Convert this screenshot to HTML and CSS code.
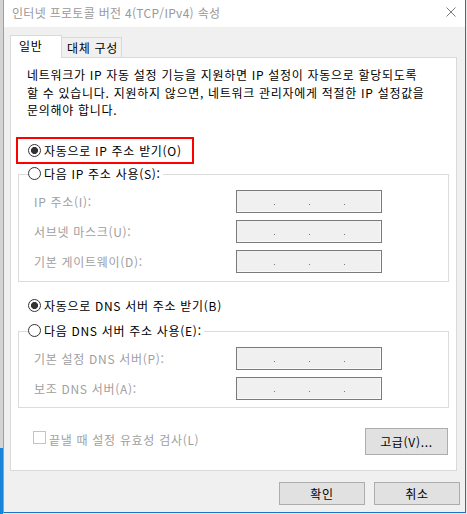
FILE: index.html
```html
<!DOCTYPE html>
<html lang="ko">
<head>
<meta charset="utf-8">
<title>인터넷 프로토콜 버전 4(TCP/IPv4) 속성</title>
<link rel="stylesheet" href="styles.css">
</head>
<body>
<div class="screen">
  <div class="strip"></div>
  <div class="window">
    <div class="titlebar">
      <span class="title">인터넷 프로토콜 버전 4(TCP/IPv4) 속성</span>
      <svg class="close" width="10" height="10" viewBox="0 0 10 10"><path d="M0.5 0.5 L9.5 9.5 M9.5 0.5 L0.5 9.5" stroke="#7a7a7a" stroke-width="1" fill="none"/></svg>
    </div>
    <div class="client">
      <div class="tabs">
        <div class="tab active">일반</div>
        <div class="tab">대체 구성</div>
      </div>
      <div class="panel">
        <p class="desc">네트워크가 IP 자동 설정 기능을 지원하면 IP 설정이 자동으로 할당되도록<br>할 수 있습니다. 지원하지 않으면, 네트워크 관리자에게 적절한 IP 설정값을<br>문의해야 합니다.</p>
        <div class="highlight">
          <div class="radio"><span class="dot checked"></span>자동으로 IP 주소 받기(O)</div>
        </div>
        <div class="group g1">
          <div class="legend radio"><span class="dot"></span>다음 IP 주소 사용(S):</div>
          <div class="rows">
            <div class="lbl">IP 주소(I):</div>
            <div class="ip"><i></i><i></i><i></i></div>
            <div class="lbl">서브넷 마스크(U):</div>
            <div class="ip"><i></i><i></i><i></i></div>
            <div class="lbl">기본 게이트웨이(D):</div>
            <div class="ip"><i></i><i></i><i></i></div>
          </div>
        </div>
        <div class="radio radio-row"><span class="dot checked"></span>자동으로 DNS 서버 주소 받기(B)</div>
        <div class="group g2">
          <div class="legend radio"><span class="dot"></span>다음 DNS 서버 주소 사용(E):</div>
          <div class="rows">
            <div class="lbl">기본 설정 DNS 서버(P):</div>
            <div class="ip"><i></i><i></i><i></i></div>
            <div class="lbl">보조 DNS 서버(A):</div>
            <div class="ip"><i></i><i></i><i></i></div>
          </div>
        </div>
        <div class="footer">
          <div class="check"><span class="box"></span>끝낼 때 설정 유효성 검사(L)</div>
          <button class="btn adv">고급(V)...</button>
        </div>
      </div>
      <div class="actions">
        <button class="btn">확인</button>
        <button class="btn">취소</button>
      </div>
    </div>
  </div>
</div>
</body>
</html>
```
FILE: styles.css
```css
html, body {
  margin: 0;
  padding: 0;
}
body {
  background: #e9e9e9;
  font-family: "Noto Sans CJK KR", "Noto Sans", sans-serif;
  font-size: 12px;
  color: #000;
}
.screen {
  display: flex;
  width: 467px;
  height: 514px;
  overflow: hidden;
}
.strip {
  width: 3px;
  flex: none;
  background: linear-gradient(#d4d4d4 0 448px, #1883d7 448px);
}
.window {
  width: 463px;
  height: 513px;
  flex: none;
  box-sizing: border-box;
  border-left: 1px solid #a0a0a0;
  border-right: 1px solid #1b74c6;
  border-bottom: 1px solid #1b74c6;
  background: #f0f0f0;
  display: flex;
  flex-direction: column;
}
.titlebar {
  height: 27px;
  flex: none;
  box-sizing: border-box;
  background: #fff;
  display: flex;
  align-items: center;
  justify-content: space-between;
  padding: 0 9px 3px 8px;
}
.title {
  color: #999;
  white-space: nowrap;
  letter-spacing: 0.3px;
}
.close {
  display: block;
}
.client {
  flex: 1;
  display: flex;
  flex-direction: column;
  padding: 8px 8px 0 6px;
  letter-spacing: 0.7px;
}
.tabs {
  display: flex;
  align-items: flex-end;
  height: 23px;
  margin-bottom: -1px;
  position: relative;
  z-index: 1;
}
.tab {
  box-sizing: border-box;
  width: 60px;
  height: 21px;
  border: 1px solid #d9d9d9;
  border-left: none;
  background: #f0f0f0;
  padding-left: 5px;
  line-height: 19px;
  white-space: nowrap;
}
.tab.active {
  width: 52px;
  height: 23px;
  border-left: 1px solid #d9d9d9;
  border-bottom: none;
  background: #fff;
  padding-left: 8px;
  line-height: 19px;
}
.panel {
  box-sizing: border-box;
  height: 414px;
  background: #fff;
  border: 1px solid #d9d9d9;
  padding-top: 8px;
  display: flex;
  flex-direction: column;
}
.desc {
  margin: 0 0 0 16px;
  line-height: 17.5px;
  white-space: nowrap;
}
.highlight {
  box-sizing: border-box;
  width: 178px;
  height: 27px;
  margin: 18.5px 0 0 5px;
  border: 2px solid #f00;
  display: flex;
  align-items: center;
  padding-left: 10px;
}
.radio {
  display: flex;
  align-items: center;
  gap: 3px;
  height: 18px;
  white-space: nowrap;
}
.dot {
  box-sizing: border-box;
  width: 13px;
  height: 13px;
  flex: none;
  border: 1px solid #333;
  border-radius: 50%;
  background: #fff;
}
.dot.checked {
  background: radial-gradient(circle, #333 0 3.3px, #fff 3.8px);
}
.group {
  margin: 10px 7px 0 7px;
  border: 1px solid #dcdcdc;
  padding: 0 0 8px 0;
}
.legend {
  margin: -11px 0 0 9px;
  width: max-content;
  background: #fff;
  padding-right: 2px;
}
.rows {
  display: grid;
  grid-template-columns: 202px 146px;
  row-gap: 7px;
  align-items: center;
  margin-top: 8px;
  padding-left: 15px;
}
.lbl {
  color: #a0a0a0;
  white-space: nowrap;
}
.ip {
  box-sizing: border-box;
  height: 23px;
  border: 1px solid #7a7a7a;
  background: #f0f0f0;
  box-shadow: inset -1px -1px 0 #fafafa;
  display: flex;
  align-items: flex-start;
  gap: 34px;
  padding: 13px 0 0 37px;
}
.ip i {
  display: block;
  width: 1px;
  height: 1px;
  background: #777;
}
.radio-row {
  margin: 14px 0 0 17px;
}
.g2 {
  margin-top: 17px;
  padding-bottom: 7px;
}
.footer {
  display: flex;
  align-items: flex-start;
  justify-content: space-between;
  margin-top: 20px;
  padding: 0 8px 0 22px;
}
.check {
  display: flex;
  align-items: center;
  gap: 3px;
  height: 18px;
  margin-top: 2px;
  color: #a0a0a0;
  white-space: nowrap;
}
.box {
  box-sizing: border-box;
  width: 13px;
  height: 13px;
  border: 1px solid #c4c4c4;
  background: #fff;
  margin-bottom: 3px;
}
.btn {
  box-sizing: border-box;
  width: 86px;
  height: 23px;
  padding: 0;
  margin: 0;
  font: inherit;
  letter-spacing: inherit;
  color: #000;
  background: #e1e1e1;
  border: 1px solid #adadad;
  border-radius: 0;
}
.btn.adv {
  width: 83px;
  height: 27px;
}
.actions {
  display: flex;
  justify-content: flex-end;
  gap: 9px;
  margin: 11px -3px 0 0;
}
```
